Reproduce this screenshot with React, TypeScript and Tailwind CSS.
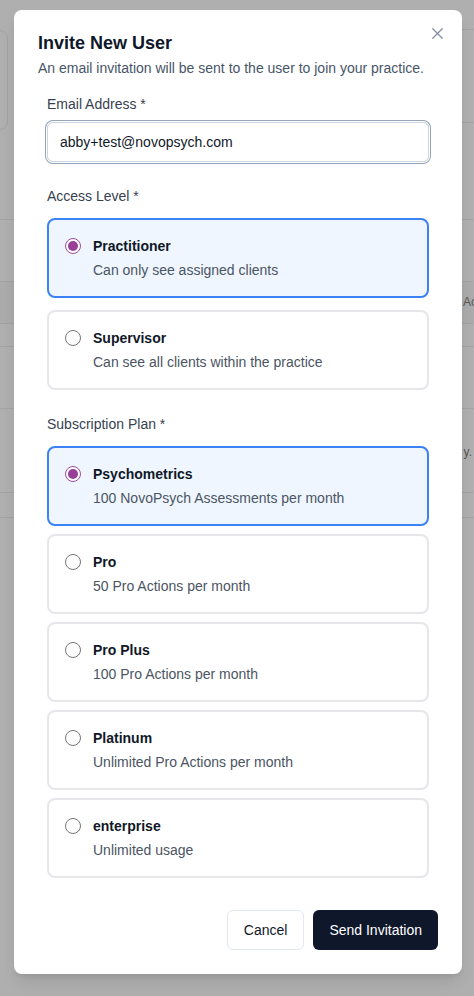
import { X } from "lucide-react";

const FONT = { fontFamily: '"Liberation Sans", Arial, sans-serif' };

interface Option {
  title: string;
  desc: string;
}

const ACCESS: Option[] = [
  { title: "Practitioner", desc: "Can only see assigned clients" },
  { title: "Supervisor", desc: "Can see all clients within the practice" },
];

const PLANS: Option[] = [
  { title: "Psychometrics", desc: "100 NovoPsych Assessments per month" },
  { title: "Pro", desc: "50 Pro Actions per month" },
  { title: "Pro Plus", desc: "100 Pro Actions per month" },
  { title: "Platinum", desc: "Unlimited Pro Actions per month" },
  { title: "enterprise", desc: "Unlimited usage" },
];

function Radio({ checked }: { checked: boolean }) {
  return checked ? (
    <span className="w-4 h-4 rounded-full border border-[#a04aa0] flex items-center justify-center shrink-0 bg-white">
      <span className="w-[10px] h-[10px] rounded-full bg-[#983f97]" />
    </span>
  ) : (
    <span className="w-4 h-4 rounded-full border border-[#767676] bg-white shrink-0" />
  );
}

function OptionCard({ option, selected }: { option: Option; selected: boolean }) {
  return (
    <div
      className={
        selected
          ? "h-20 rounded-lg border-2 border-[#3b82f6] bg-[#eff6ff] px-4 pt-4"
          : "h-20 rounded-lg border-2 border-[#e5e7eb] bg-white px-4 pt-4"
      }
    >
      <div className="flex items-center gap-3 h-5">
        <Radio checked={selected} />
        <span className="text-sm font-bold text-[#111827]">{option.title}</span>
      </div>
      <p className="mt-1 pl-7 text-sm leading-5 text-[#4b5563]">{option.desc}</p>
    </div>
  );
}

function Background() {
  return (
    <div className="h-full w-full bg-[#afafaf]">
      {/* top cards */}
      <div className="flex gap-3 pt-[30px]">
        <div className="w-[200px] -ml-[192px] h-[100px] rounded-lg border border-[#a2a2a2] shrink-0" />
        <div className="flex-1 h-[94px] -mt-px border-y border-[#a2a2a2]" />
      </div>
      {/* table */}
      <div className="mt-[89px] border-b border-[#a2a2a2] h-px" />
      <div className="h-[62px] border-b border-[#a2a2a2]" />
      <div className="h-[42px] border-b border-[#a2a2a2] bg-[#ababab] flex items-start justify-end">
        <span className="mt-[12px] mr-[-3px] text-xs text-[#555]" style={FONT}>Ac</span>
      </div>
      <div className="h-[23px] border-b border-[#a2a2a2]" />
      <div className="h-[62px] border-b border-[#a2a2a2]" />
      <div className="h-[84px] border-b border-[#a2a2a2] flex items-center justify-end">
        <span className="mr-[2px] mt-[3px] text-xs text-[#555]" style={FONT}>y.</span>
      </div>
      <div className="h-[25px] border-b border-[#a2a2a2]" />
    </div>
  );
}

export default function App() {
  return (
    <div className="relative w-full h-[996px] overflow-hidden" style={FONT}>
      <Background />

      {/* Modal */}
      <div className="absolute left-[14px] top-[10px] w-[448px] rounded-lg bg-white shadow-lg px-6 pt-6 pb-6">
        <button className="absolute right-[15px] top-[14px] text-[#64748b] opacity-80">
          <X className="w-[19px] h-[19px]" strokeWidth={1.6} />
        </button>

        <h2 className="text-lg leading-[18px] font-bold text-[#0f172a]">Invite New User</h2>
        <p className="mt-[6px] text-sm leading-5 text-[#475569]">
          An email invitation will be sent to the user to join your practice.
        </p>

        <div className="mx-[9px] mt-4">
          <label className="block text-sm leading-5 text-[#374151]">Email Address *</label>
          <div className="mt-2 h-10 rounded-md border border-[#cbd5e1] ring-1 ring-[#94a3b8] ring-offset-1 flex items-center px-3">
            <span className="text-sm text-[#111827]">abby+test@novopsych.com</span>
          </div>

          <label className="block mt-6 text-sm leading-5 text-[#374151]">Access Level *</label>
          <div className="mt-3 flex flex-col gap-3">
            {ACCESS.map((o, i) => (
              <OptionCard key={o.title} option={o} selected={i === 0} />
            ))}
          </div>

          <label className="block mt-6 text-sm leading-5 text-[#374151]">Subscription Plan *</label>
          <div className="mt-3 flex flex-col gap-2">
            {PLANS.map((o, i) => (
              <OptionCard key={o.title} option={o} selected={i === 0} />
            ))}
          </div>
        </div>

        <div className="mt-8 flex justify-end gap-[9px]">
          <button className="h-10 px-4 rounded-md border border-[#e2e8f0] bg-white text-sm font-medium text-[#0f172a]">
            Cancel
          </button>
          <button className="h-10 px-4 rounded-md bg-[#0f172a] text-sm font-medium text-white">
            Send Invitation
          </button>
        </div>
      </div>
    </div>
  );
}
